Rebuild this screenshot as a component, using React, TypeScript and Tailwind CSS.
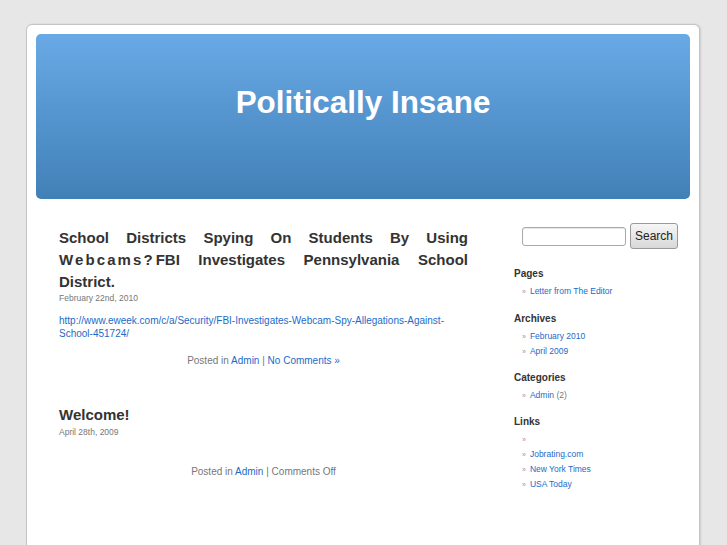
const font = "font-['Liberation_Sans',Arial,sans-serif]"

function Bullet() {
  return <span className="mr-[4px] text-[7px] text-[#999]">»</span>
}

function SideLink({ children, extra }: { children: React.ReactNode; extra?: string }) {
  return (
    <li className="pl-[8px] leading-[15px]">
      <Bullet />
      <a href="#" className="text-[#1a6bc9]">
        {children}
      </a>
      {extra && <span className="text-[#777]"> {extra}</span>}
    </li>
  )
}

function Widget({ title, children, className = "" }: { title: string; children: React.ReactNode; className?: string }) {
  return (
    <div className={className}>
      <h2 className="text-[10px] font-bold leading-[14px] text-[#333]">{title}</h2>
      <ul className="mt-[2.5px] mb-[1px] text-[8.5px]">{children}</ul>
    </div>
  )
}

function JustifiedLine({ words }: { words: React.ReactNode[] }) {
  return (
    <div className="flex justify-between">
      {words.map((w, i) => (
        <span key={i}>{w}</span>
      ))}
    </div>
  )
}

function PostMeta({ comments }: { comments: React.ReactNode }) {
  return (
    <p className="text-center text-[10px] leading-[13px] text-[#777]">
      Posted in{" "}
      <a href="#" className="text-[#1a6bc9]">
        Admin
      </a>{" "}
      | {comments}
    </p>
  )
}

export default function App() {
  return (
    <div className={`h-[545px] overflow-hidden bg-[#e7e7e7] pt-[24px] ${font}`}>
      <div className="ml-[26px] h-[540px] w-[674px] rounded-t-[6px] border border-[#c4c4c4] bg-white px-[9px] pt-[9px] shadow-[1px_0_2px_rgba(0,0,0,0.12)]">
        {/* Header */}
        <div className="h-[165px] rounded-[5px] bg-gradient-to-b from-[#69aae6] to-[#4180b7] pt-[51px] text-center">
          <h1 className="text-[31.4px] font-bold leading-[36px] text-white">Politically Insane</h1>
        </div>

        <div className="flex">
          {/* Posts */}
          <div className="ml-[23px] w-[409px]">
            <div className="pt-[27.5px]">
              <h2 className="text-[15px] font-bold leading-[22px] text-[#333]">
                <JustifiedLine words={["School", "Districts", "Spying", "On", "Students", "By", "Using"]} />
                <JustifiedLine
                  words={[
                    <>
                      <span className="tracking-[2.1px]">Webcams</span>?<span className="ml-[3px]">FBI</span>
                    </>,
                    "Investigates",
                    "Pennsylvania",
                    "School",
                  ]}
                />
                <div>District.</div>
              </h2>
              <p className="text-[8.5px] leading-[11px] text-[#777]">February 22nd, 2010</p>
              <p className="mt-[10.5px] text-[10px] leading-[13px] text-[#1a6bc9]">
                <a href="#">
                  http://www.eweek.com/c/a/Security/FBI-Investigates-Webcam-Spy-Allegations-Against-
                  <br />
                  School-451724/
                </a>
              </p>
              <div className="mt-[14px]">
                <PostMeta
                  comments={
                    <a href="#" className="text-[#1a6bc9]">
                      No Comments »
                    </a>
                  }
                />
              </div>
            </div>

            <div className="mt-[38px]">
              <h2 className="text-[15px] font-bold leading-[20px] text-[#333]">Welcome!</h2>
              <p className="mt-[1.5px] text-[8.5px] leading-[11px] text-[#777]">April 28th, 2009</p>
              <div className="mt-[27px]">
                <PostMeta comments="Comments Off" />
              </div>
            </div>
          </div>

          {/* Sidebar */}
          <div className="ml-[46px] w-[176px] pt-[24px]">
            <form className="flex items-center pl-[8px]">
              <input
                type="text"
                className="mt-[1px] h-[19px] w-[104px] rounded-[3px] border border-[#a9a9a9] bg-white shadow-[inset_0_1px_1px_rgba(0,0,0,0.1)] outline-none"
              />
              <button
                type="button"
                className="ml-[4px] h-[26px] w-[48px] rounded-[3px] border border-[#9a9a9a] bg-gradient-to-b from-[#f6f6f6] to-[#d8d8d8] text-[12px] text-[#222]"
              >
                Search
              </button>
            </form>

            <div className="mt-[18px] flex flex-col gap-[11.5px]">
              <Widget title="Pages" className="mb-[1px]">
                <SideLink>Letter from The Editor</SideLink>
              </Widget>
              <Widget title="Archives">
                <SideLink>February 2010</SideLink>
                <SideLink>April 2009</SideLink>
              </Widget>
              <Widget title="Categories">
                <SideLink extra="(2)">Admin</SideLink>
              </Widget>
              <Widget title="Links">
                <li className="pl-[8px] leading-[15px]">
                  <Bullet />
                </li>
                <SideLink>Jobrating.com</SideLink>
                <SideLink>New York Times</SideLink>
                <SideLink>USA Today</SideLink>
              </Widget>
            </div>
          </div>
        </div>
      </div>
    </div>
  )
}
